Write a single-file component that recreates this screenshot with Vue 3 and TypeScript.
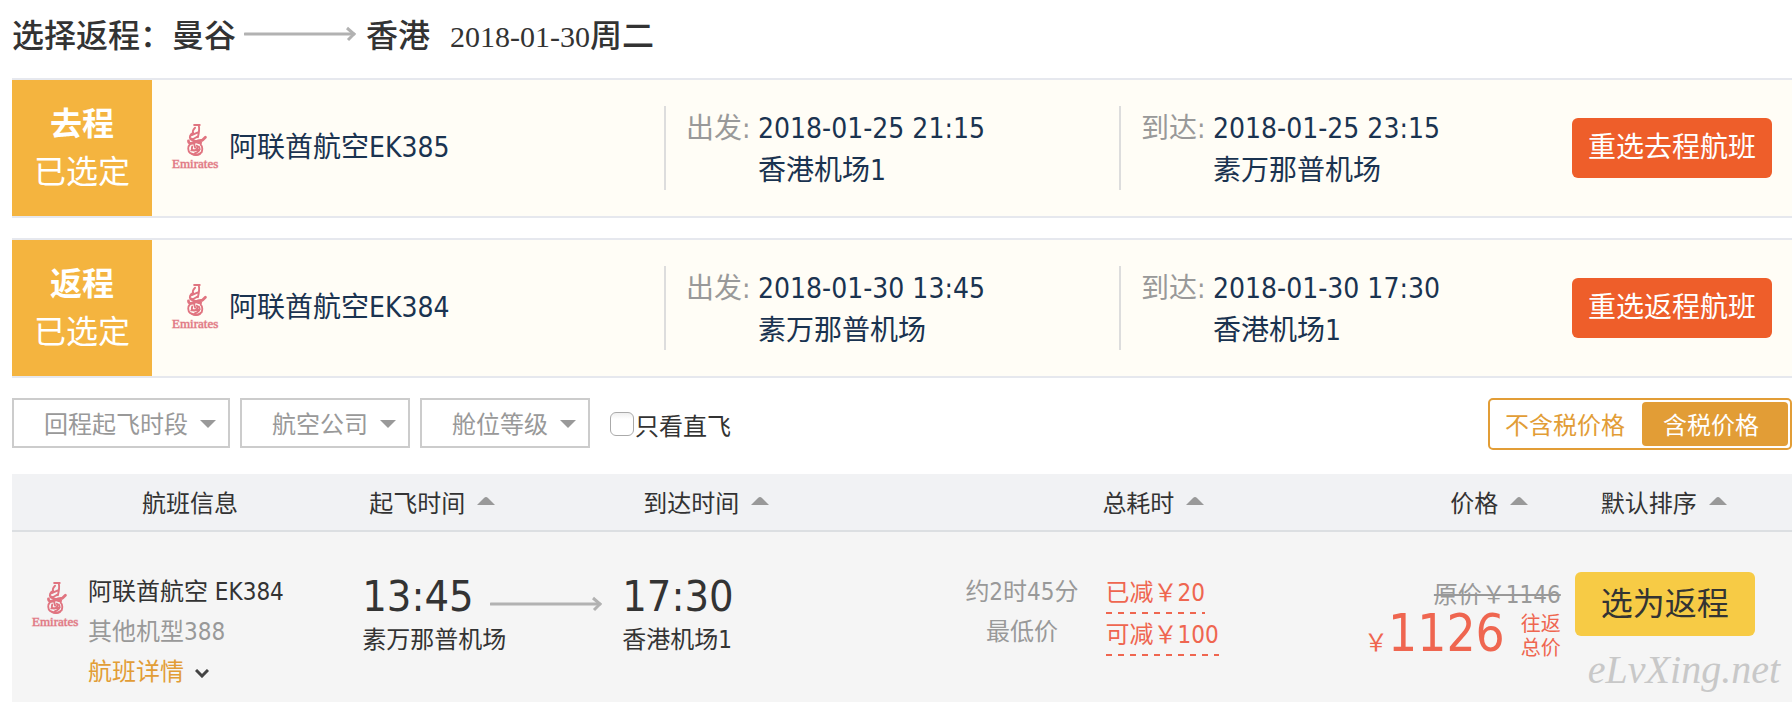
<script setup lang="ts">
import { ref } from 'vue'

interface Leg {
  name: string
  flight: string
  departTime: string
  departPlace: string
  arriveTime: string
  arrivePlace: string
  action: string
}

const legs: Leg[] = [
  {
    name: '去程',
    flight: '阿联酋航空EK385',
    departTime: '2018-01-25 21:15',
    departPlace: '香港机场1',
    arriveTime: '2018-01-25 23:15',
    arrivePlace: '素万那普机场',
    action: '重选去程航班',
  },
  {
    name: '返程',
    flight: '阿联酋航空EK384',
    departTime: '2018-01-30 13:45',
    departPlace: '素万那普机场',
    arriveTime: '2018-01-30 17:30',
    arrivePlace: '香港机场1',
    action: '重选返程航班',
  },
]

const filters = [
  { label: '回程起飞时段', wide: true },
  { label: '航空公司', wide: false },
  { label: '舱位等级', wide: false },
]

const columns = [
  { key: 'info', label: '航班信息', sortable: false },
  { key: 'depart', label: '起飞时间', sortable: true },
  { key: 'arrive', label: '到达时间', sortable: true },
  { key: 'duration', label: '总耗时', sortable: true },
  { key: 'price', label: '价格', sortable: true },
  { key: 'order', label: '默认排序', sortable: true },
]

const directOnly = ref(false)
const taxIncluded = ref(true)
</script>

<template>
  <svg class="symbols" width="0" height="0" aria-hidden="true">
    <symbol id="airline-mark" viewBox="0 0 48 34">
      <g fill="none" stroke="#e07480" stroke-linecap="round" stroke-linejoin="round">
        <path stroke-width="2" d="M22 1h6M27 2c1 4 0 8-1 12M23 4c-2 2-3 4-2 6M21 9c-3 2-4 5-3 7 2 1 5-1 8-3M19 12l7-3" />
        <path stroke-width="3" d="M16 18c0 3 2 3 5 2l5-2c3-1 4 0 5-1l3-3M19 16c3 2 6 4 10 4" />
        <path stroke-width="2" d="M18 21c-3 3-3 8 0 10 4 2 9 2 12-1 1-3 1-6-1-8M20 24c-1 3 0 5 3 4 2-1 3-3 2-5M27 24c2 3 0 6-4 7M22 21l1 4M19 28l9-1" />
        <path stroke-width="2" d="M20 32c2 1 6 1 8 0" />
      </g>
    </symbol>
    <symbol id="long-arrow" viewBox="0 0 112 16">
      <path d="M1 8H110" fill="none" stroke="#b2b2b2" stroke-width="3" stroke-linecap="round" />
      <path d="M103 2L110 8L104 14" fill="none" stroke="#b2b2b2" stroke-width="3" />
    </symbol>
  </svg>

  <main class="page">
    <h1 class="title">
      <span class="step">选择返程：</span>
      <span>曼谷</span>
      <svg class="arrow" aria-hidden="true"><use href="#long-arrow" /></svg>
      <span>香港</span>
      <span class="day"><span class="day-num">2018-01-30</span>周二</span>
    </h1>

    <section v-for="leg in legs" :key="leg.name" class="leg">
      <div class="badge"><strong>{{ leg.name }}</strong><span>已选定</span></div>
      <div class="carrier">
        <span class="logo">
          <svg class="logo-mark" aria-hidden="true"><use href="#airline-mark" /></svg>
          <span class="logo-word">Emirates</span>
        </span>
        <span>{{ leg.flight }}</span>
      </div>
      <div class="point">
        <span class="point-label">出发:</span>
        <span class="when">{{ leg.departTime }}</span>
        <span class="place">{{ leg.departPlace }}</span>
      </div>
      <div class="point">
        <span class="point-label">到达:</span>
        <span class="when">{{ leg.arriveTime }}</span>
        <span class="place">{{ leg.arrivePlace }}</span>
      </div>
      <div><button type="button" class="reselect">{{ leg.action }}</button></div>
    </section>

    <div class="filters">
      <div v-for="f in filters" :key="f.label" class="filter" :class="{ wide: f.wide }">
        <select class="filter-select" :aria-label="f.label"><option>{{ f.label }}</option></select>
        <svg class="caret" viewBox="0 0 16 8" aria-hidden="true"><path d="M0 0H16L8 8Z" fill="#999" /></svg>
      </div>
      <label class="direct"><input v-model="directOnly" type="checkbox" />只看直飞</label>
      <div class="tax">
        <button type="button" :class="{ active: !taxIncluded }" @click="taxIncluded = false">不含税价格</button>
        <button type="button" :class="{ active: taxIncluded }" @click="taxIncluded = true">含税价格</button>
      </div>
    </div>

    <table class="flights">
      <colgroup><col v-for="c in columns" :key="c.key" :class="'col-' + c.key" /></colgroup>
      <thead>
        <tr>
          <th v-for="c in columns" :key="c.key" :class="'h-' + c.key" scope="col">
            <button v-if="c.sortable" type="button" class="sort">
              {{ c.label }}
              <svg class="sort-icon" viewBox="0 0 18 8" aria-hidden="true"><path d="M0 8H18L11 1Q9 -1 7 1Z" fill="#999" /></svg>
            </button>
            <template v-else>{{ c.label }}</template>
          </th>
        </tr>
      </thead>
      <tbody>
        <tr>
          <td class="info">
            <div class="info-row">
              <span class="logo">
                <svg class="logo-mark" aria-hidden="true"><use href="#airline-mark" /></svg>
                <span class="logo-word">Emirates</span>
              </span>
              <div class="lines">
                <span>阿联酋航空 EK384</span>
                <span class="muted">其他机型388</span>
                <a href="#" class="detail">航班详情
                  <svg class="chevron" viewBox="0 0 14 9" aria-hidden="true"><path d="M1 1L7 7L13 1" fill="none" stroke="#444" stroke-width="3" /></svg>
                </a>
              </div>
            </div>
          </td>
          <td class="depart">
            <div class="time-row">
              <span class="time">13:45</span>
              <svg class="arrow" aria-hidden="true"><use href="#long-arrow" /></svg>
            </div>
            <div class="airport">素万那普机场</div>
          </td>
          <td class="arrive">
            <div class="time-row"><span class="time">17:30</span></div>
            <div class="airport">香港机场1</div>
          </td>
          <td class="length">
            <div class="length-row">
              <div class="lines muted centered"><span>约2时45分</span><span>最低价</span></div>
              <div class="deals"><span class="deal">已减￥20</span><span class="deal">可减￥100</span></div>
            </div>
          </td>
          <td class="cost">
            <del class="was">原价￥1146</del>
            <div class="now">
              <span class="amount"><span class="yen">￥</span>1126</span>
              <span class="scope">往返<br />总价</span>
            </div>
          </td>
          <td class="pick">
            <button type="button" class="choose">选为返程</button>
            <span class="watermark">eLvXing.net</span>
          </td>
        </tr>
      </tbody>
    </table>
  </main>
</template>

<style>
body {
  background: #fff;
  overflow-x: hidden;
}
</style>

<style scoped>
.page {
  padding-left: 12px;
  color: #333;
  font-family: "DejaVu Sans Condensed", "Noto Sans CJK SC", sans-serif;
  font-size: 24px;
}

button,
select {
  font: inherit;
  margin: 0;
  padding: 0;
  border: 0;
  background: none;
  color: inherit;
}

button {
  cursor: pointer;
}

.symbols {
  position: absolute;
}

.logo {
  display: flex;
  flex-direction: column;
  flex: none;
  width: 48px;
  height: 48px;
}

.logo-mark {
  width: 48px;
  height: 34px;
}

.logo-word {
  color: #e07480;
  font: 13px/16px "Liberation Serif", serif;
  -webkit-text-stroke: 1px #e0748080;
}

.arrow {
  width: 112px;
  height: 16px;
  flex: none;
}

.title {
  display: flex;
  align-items: center;
  margin: 0;
  height: 72px;
  padding-bottom: 6px;
  font: 500 32px/48px "Liberation Serif", "Noto Sans CJK SC", serif;
}

.title .arrow {
  margin: 0 10px 4px 8px;
}

.day {
  margin-left: 20px;
}

.day-num {
  font-size: 30px;
}

.leg {
  display: grid;
  grid-template-columns: 140px 512fr 455fr 453fr 220px;
  align-items: center;
  margin-bottom: 20px;
  border-top: 2px solid #e6e8ee;
  border-bottom: 2px solid #e6e8ee;
  background: #fffdf6;
  color: #1a3350;
  font-size: 28px;
  line-height: 42px;
}

.badge {
  display: flex;
  flex-direction: column;
  align-items: center;
  padding: 20px 0;
  background: #f4b43f;
  color: #fff;
  font-size: 32px;
  line-height: 48px;
}

.carrier {
  display: flex;
  align-items: center;
  gap: 9px;
  padding-left: 20px;
}

.point {
  display: grid;
  grid-template-columns: 72px auto;
  grid-template-rows: 42px 42px;
  justify-content: start;
  padding-left: 20px;
  border-left: 2px solid #ddd;
  line-height: 46px;
}

.point-label {
  color: #999;
  white-space: nowrap;
}

.place {
  grid-column: 2;
}

.reselect {
  width: 200px;
  height: 60px;
  border-radius: 6px;
  background: #ee5e2a;
  color: #fff;
}

.filters {
  display: flex;
  align-items: flex-start;
  gap: 10px;
  margin-bottom: 24px;
}

.filter {
  position: relative;
}

.filter-select {
  appearance: none;
  display: block;
  width: 170px;
  height: 50px;
  padding: 4px 0 0 30px;
  border: 2px solid #ccc;
  background: #fff;
  color: #999;
}

.wide .filter-select {
  width: 218px;
}

.caret {
  position: absolute;
  right: 14px;
  top: 22px;
  width: 16px;
  height: 8px;
  pointer-events: none;
}

.direct {
  display: flex;
  align-items: center;
  height: 52px;
  margin-left: 10px;
}

.direct input {
  appearance: none;
  width: 24px;
  height: 24px;
  margin: 0 1px 0 0;
  border: 1px solid #aaa;
  border-radius: 6px;
  background: linear-gradient(#f0f0f0, #fff 6px);
}

.direct input:checked {
  background: #e29d36;
}

.tax {
  display: flex;
  margin-left: auto;
  padding: 2px;
  border: 2px solid #e29d36;
  border-radius: 5px;
}

.tax button {
  height: 44px;
  padding: 0 17px 2px 13px;
  border-radius: 4px;
  color: #e29d36;
}

.tax button.active {
  padding: 0 29px 2px 21px;
  background: #e29d36;
  color: #fff;
}

.flights {
  width: 100%;
  table-layout: fixed;
  border-collapse: collapse;
  background: #f5f5f5;
}

.col-info { width: 19%; }
.col-depart { width: 15%; }
.col-arrive { width: 19%; }
.col-duration { width: 16%; }
.col-price { width: 18.8%; }
.col-order { width: 12.2%; }

th {
  height: 54px;
  padding: 0 0 2px;
  border-bottom: 2px solid #dcdfe2;
  background: #f1f2f4;
  font-weight: 400;
  text-align: left;
  white-space: nowrap;
}

.sort {
  display: flex;
  align-items: center;
  gap: 12px;
}

.sort-icon {
  width: 18px;
  height: 8px;
}

.h-info { padding-left: 130px; }
.h-depart { padding-left: 19px; }
.h-arrive { padding-left: 26px; }
.h-duration { padding-left: 147px; }
.h-price { padding-left: 210px; }
.h-order { padding-left: 26px; }

td {
  height: 130px;
  padding: 40px 0 0;
  vertical-align: top;
  line-height: 40px;
  white-space: nowrap;
}

.info-row {
  display: flex;
  gap: 8px;
  padding-left: 20px;
}

.info-row .logo {
  margin-top: 10px;
}

.lines {
  display: flex;
  flex-direction: column;
}

.centered {
  align-items: center;
}

.muted {
  color: #999;
}

.detail {
  color: #e29d36;
  text-decoration: none;
}

.chevron {
  width: 14px;
  height: 9px;
  margin-left: 4px;
  vertical-align: middle;
}

.depart {
  padding-left: 12px;
}

.arrive {
  padding-left: 5px;
}

.time-row {
  display: flex;
  align-items: center;
  gap: 16px;
  height: 48px;
}

.time {
  font-size: 43px;
  line-height: 44px;
}

.time-row .arrow {
  margin-top: 16px;
}

.length-row {
  display: flex;
  gap: 27px;
  padding-left: 10px;
}

.deals {
  display: flex;
  flex-direction: column;
  align-items: flex-start;
  color: #ef6650;
  line-height: 42px;
}

.deal {
  height: 42px;
  background: repeating-linear-gradient(90deg, #ef6650 0 6px, transparent 6px 12px) left bottom / 100% 2px no-repeat;
}

.cost {
  padding: 46px 14px 0 0;
  text-align: right;
}

.was {
  display: block;
  color: #999;
  line-height: 34px;
}

.now {
  display: flex;
  justify-content: flex-end;
  align-items: flex-start;
  gap: 16px;
  color: #ef6650;
}

.amount {
  font-size: 51px;
  line-height: 44px;
}

.yen {
  font-size: 24px;
}

.scope {
  font-size: 20px;
  line-height: 24px;
}

.pick {
  position: relative;
}

.choose {
  display: block;
  width: 180px;
  height: 64px;
  border-radius: 6px;
  background: #f7cb45;
  color: #333;
  font-size: 32px;
}

.watermark {
  position: absolute;
  right: 12px;
  bottom: 18px;
  color: #c8c8c8;
  font: italic 40px/40px "Liberation Serif", serif;
}
</style>
